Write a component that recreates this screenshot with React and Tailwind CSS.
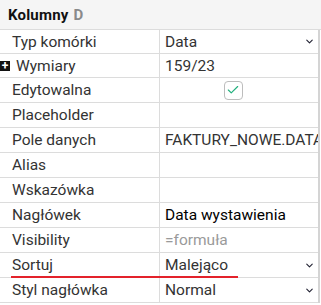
import { ChevronDown, Check } from 'lucide-react'

const rows = [
  { label: 'Typ komórki', value: 'Data', select: true, h: 'h-6' },
  { label: 'Wymiary', value: '159/23', plus: true, h: 'h-6' },
  { label: 'Edytowalna', checkbox: true, h: 'h-[25px]' },
  { label: 'Placeholder', value: '', h: 'h-[25px]' },
  { label: 'Pole danych', value: 'FAKTURY_NOWE.DATA_WYSTAWIENIA', h: 'h-[25px]' },
  { label: 'Alias', value: '', h: 'h-[25px]' },
  { label: 'Wskazówka', value: '', h: 'h-[25px]' },
  { label: 'Nagłówek', value: 'Data wystawienia', strong: true, h: 'h-[25px]' },
  { label: 'Visibility', value: '=formuła', muted: true, h: 'h-[25px]' },
  { label: 'Sortuj', value: 'Malejąco', select: true, h: 'h-[25px]' },
  { label: 'Styl nagłówka', value: 'Normal', select: true, h: 'h-[25px]' },
]

function Row({ row }) {
  const valueColor = row.strong ? 'text-black' : row.muted ? 'text-[#9a9a9a]' : 'text-[#333]'
  return (
    <div className={`flex ${row.h} border-b border-[#dcdcdc]`}>
      <div className="flex w-[160px] shrink-0 items-center border-r border-[#dcdcdc]">
        {row.plus ? (
          <>
            <span className="mr-[6px] flex h-[10px] w-[10px] items-center justify-center bg-[#111] text-[12px] font-bold leading-none text-white">+</span>
            <span className="text-[#333]">{row.label}</span>
          </>
        ) : (
          <span className="pl-[12px] text-[#333]">{row.label}</span>
        )}
      </div>
      <div className="flex min-w-0 flex-1 items-center overflow-hidden">
        {row.checkbox ? (
          <div className="flex w-full justify-center pr-[12px]">
            <span className="flex h-[19px] w-[19px] items-center justify-center rounded-[4px] border border-[#bdbdbd] bg-white">
              <Check size={14} strokeWidth={2} className="text-[#22b07d]" />
            </span>
          </div>
        ) : (
          <>
            <span className={`flex-1 overflow-hidden whitespace-nowrap pl-[5px] leading-[20px] ${valueColor}`}>{row.value}</span>
            {row.select && <ChevronDown size={11} strokeWidth={2.4} className="mr-[3px] shrink-0 text-[#223]" />}
          </>
        )}
      </div>
    </div>
  )
}

export default function App() {
  return (
    <div className="relative h-[305px] w-[321px] overflow-hidden bg-white text-[15.5px] leading-[20px]" style={{ fontFamily: 'Roboto, "Noto Sans", sans-serif' }}>
      <div className="flex h-[30px] items-center border-b border-[#dcdcdc] bg-[#f5f5f5] pl-[8px] text-[15px] font-bold tracking-[0.2px]">
        <span className="text-[#111]">Kolumny</span>
        <span className="ml-[5px] text-[#8a8a8a]">D</span>
      </div>
      <div className="w-[320px] border-r-2 border-[#d4d4d4]">
        {rows.map((row) => (
          <Row key={row.label} row={row} />
        ))}
      </div>
      <div className="absolute left-[11px] top-[276px] h-[2px] w-[227px] bg-[#e3222b]" />
    </div>
  )
}
